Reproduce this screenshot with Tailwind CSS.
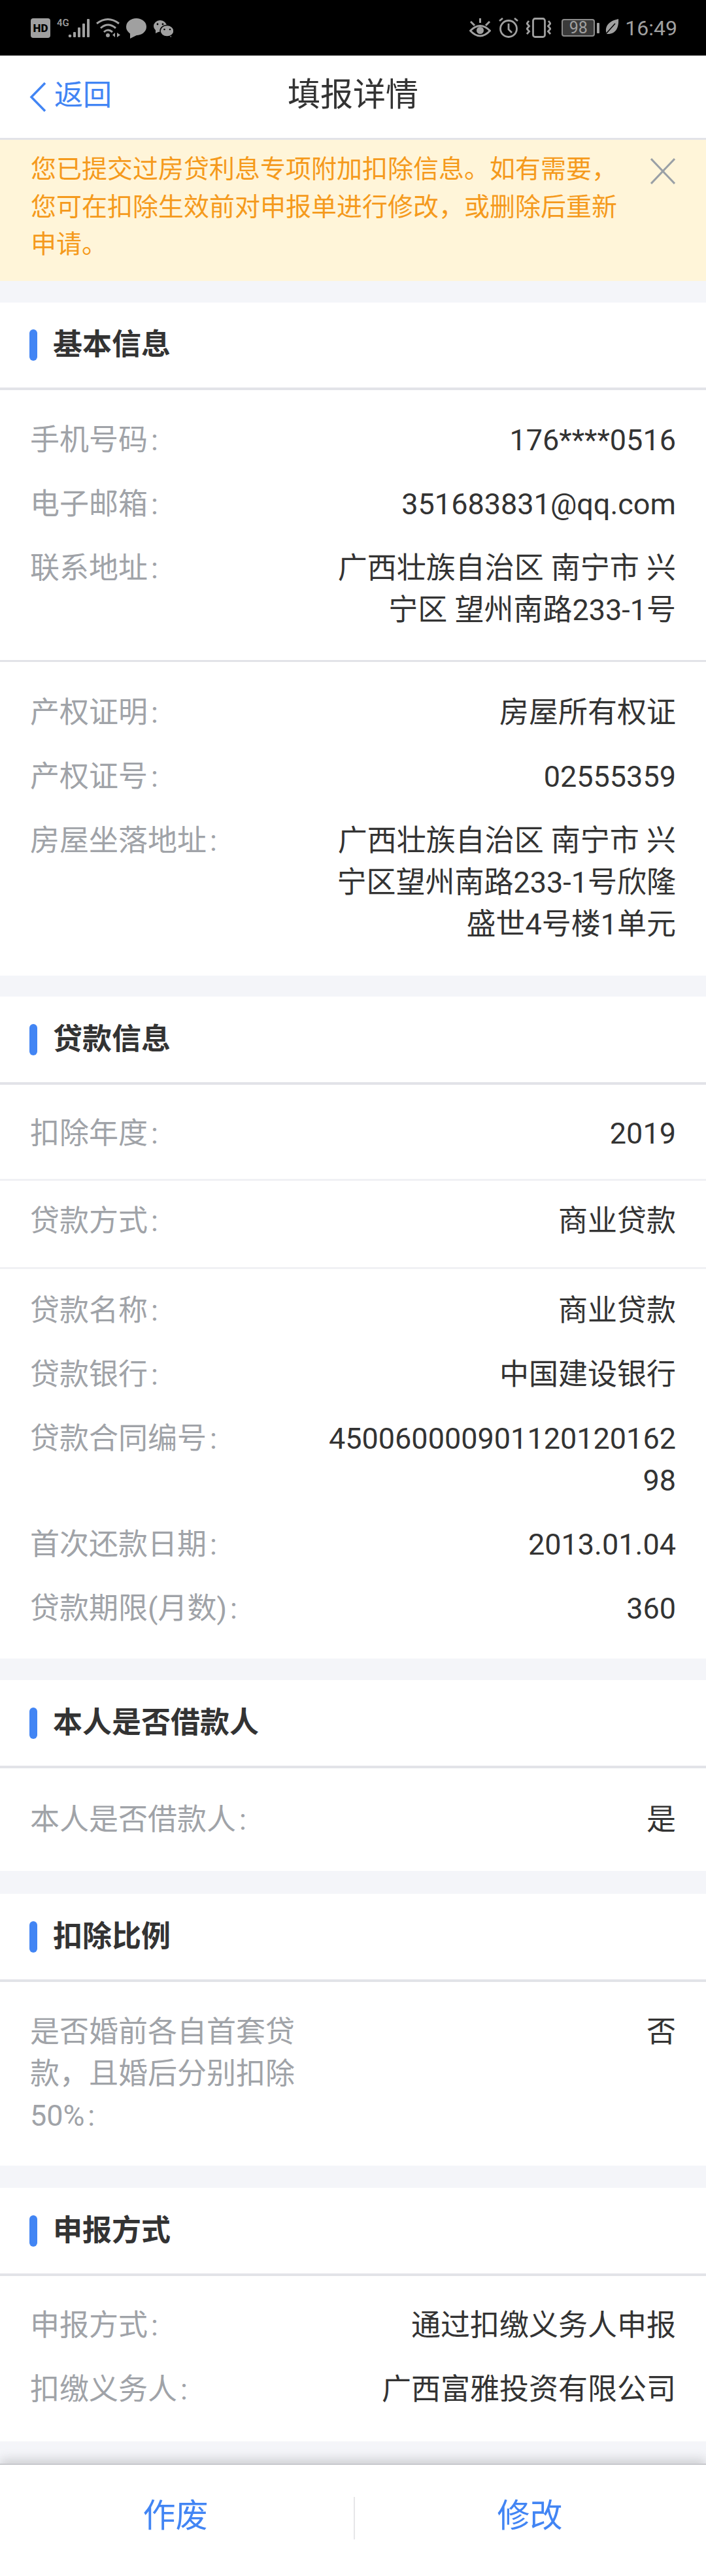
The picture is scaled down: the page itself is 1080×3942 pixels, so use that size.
<!DOCTYPE html>
<html lang="zh">
<head>
<meta charset="utf-8">
<script src="https://cdn.jsdelivr.net/npm/@tailwindcss/browser@4"></script>
<title>填报详情</title>
</head>
<body class="bg-[#f4f5f9] font-['Roboto','Noto_Sans_CJK_SC',sans-serif] text-[#333333]">
<div class="relative w-[1080px] h-[3942px] overflow-hidden">

  <!-- status bar -->
  <div class="flex justify-between items-start h-[85px] bg-black pl-[47px] pr-[44px] pt-[27px] text-[#a0a0a0]">
    <div class="flex items-start">
      <svg width="30" height="32" viewBox="0 0 30 32"><rect y="1" width="30" height="30" rx="4" fill="#a0a0a0"/><text x="15" y="22" font-size="17" font-weight="900" text-anchor="middle" fill="#000" font-family="Roboto">HD</text></svg>
      <div class="relative ml-[10px] w-[50px] h-[32px]">
        <span class="absolute left-0 top-[1px] text-[15px] leading-[15px] font-medium">4G</span>
        <svg class="absolute left-0 top-0" width="50" height="32" viewBox="0 0 50 32" fill="#a0a0a0"><circle cx="20" cy="28" r="2.3"/><rect x="25" y="22" width="4" height="8" rx="1"/><rect x="32" y="15" width="4" height="15" rx="1"/><rect x="39" y="9" width="4" height="21" rx="1"/><rect x="46" y="2" width="4" height="28" rx="1"/></svg>
      </div>
      <svg class="ml-[10px]" width="37" height="32" viewBox="0 0 37 32"><g fill="none" stroke="#a0a0a0" stroke-width="3"><path d="M1 9Q18 -4 35 9"/><path d="M7 16Q18 6 30 16"/><path d="M12 22Q18 16 25 22"/></g><g fill="#a0a0a0"><circle cx="18" cy="27" r="3"/><path d="M29 23V30L25 26.500ZM32 23V30L37 26.500Z"/></g></svg>
      <svg class="ml-[9px]" width="31" height="32" viewBox="0 0 31 32" fill="#a0a0a0"><ellipse cx="15.500" cy="14" rx="15.500" ry="13"/><path d="M6 22V32L18 26Z"/></svg>
      <svg class="ml-[11px]" width="30" height="32" viewBox="0 0 30 32"><g fill="#a0a0a0"><ellipse cx="10" cy="13" rx="10" ry="9"/><path d="M3 18V24L9 21Z"/><path d="M27 25V30L21 27Z"/><ellipse cx="20.500" cy="20.300" rx="10.500" ry="8.800" stroke="#000" stroke-width="1.500"/></g><g fill="#000"><circle cx="6" cy="10" r="1.400"/><circle cx="14" cy="10" r="1.400"/><circle cx="16.500" cy="18" r="1.300"/><circle cx="25" cy="18" r="1.300"/></g></svg>
    </div>
    <div class="flex items-start">
      <svg width="33" height="32" viewBox="0 0 33 32" fill="none" stroke="#a0a0a0" stroke-width="3"><path d="M1.500 20Q16.500 5 31.500 20Q16.500 36 1.500 20Z"/><circle cx="16.500" cy="19.500" r="5.500" fill="#a0a0a0" stroke="none"/><path d="M16.500 1V8M2 6L8 12M31 6L25 12"/></svg>
      <svg class="ml-[12px]" width="30" height="32" viewBox="0 0 30 32" fill="none" stroke="#a0a0a0" stroke-width="2.800"><circle cx="15" cy="17" r="12.500"/><path d="M15 9V18L20 23M1 5L6 1M29 5L24 1"/></svg>
      <svg class="ml-[12px]" width="38" height="32" viewBox="0 0 38 32" fill="none" stroke="#a0a0a0" stroke-width="2.800"><rect x="10.500" y="1.500" width="18" height="28" rx="3"/><path d="M4 5L1 9L4.500 13L1 17L4.500 21L1 25M34 5L37 9L33.500 13L37 17L33.500 21L37 25"/></svg>
      <div class="flex items-center ml-[16px] mt-[2px]">
        <div class="w-[51px] h-[27px] border-2 border-[#8c8c8c] bg-[#3a3a3a] rounded-[4px] flex items-center justify-center text-[25px] leading-none">98</div>
        <div class="w-[4px] h-[16px] bg-[#a0a0a0] ml-[3px] rounded-[1px]"></div>
      </div>
      <svg class="ml-[6px]" width="24" height="32" viewBox="0 0 24 32"><path d="M23 2C24 15 19 26 5 25C1 14 8 5 23 2Z" fill="#a0a0a0"/><path d="M1 28L18 9" stroke="#000" stroke-width="1.500"/></svg>
      <span class="ml-[9px] text-[32px] leading-[32px]">16:49</span>
    </div>
  </div>

  <!-- nav -->
  <div class="relative flex justify-center items-center h-[129px] bg-white border-b-[3px] border-[#e2e3e8] pb-[6px]">
    <div class="absolute left-[45px] top-[40px] flex items-center gap-[12px] text-[44px] leading-[47px] text-[#4285f4]">
      <svg width="26" height="47" viewBox="0 0 26 47" fill="none" stroke="#4285f4" stroke-width="3.500"><path d="M24 2L3 23.500L24 45"/></svg>
      <span class="-mt-[5px]">返回</span>
    </div>
    <span class="text-[50px] leading-none">填报详情</span>
  </div>

  <!-- notice -->
  <div class="relative h-[216px] bg-[#fff5d9] pl-[47px] pt-[17px] text-[39px] leading-[57.500px] text-[#f59a1c]">
    您已提交过房贷利息专项附加扣除信息。如有需要，<br>您可在扣除生效前对申报单进行修改，或删除后重新<br>申请。
    <svg class="absolute left-[995px] top-[28px]" width="38" height="40" viewBox="0 0 38 40" fill="none" stroke="#9aa0a6" stroke-width="3"><path d="M1 1L37 39M37 1L1 39"/></svg>
  </div>

  <!-- 基本信息 -->
  <div class="mt-[33px] bg-white text-[45px] leading-[64px]">
    <div class="flex items-center gap-[24px] h-[134px] pl-[45px] border-b-[4px] border-[#e2e3e8]">
      <span class="w-[12px] h-[48px] rounded-full bg-[#4285f4]"></span>
      <span class="font-bold">基本信息</span>
    </div>
    <div class="flex flex-col gap-[34px] px-[46px] pt-[45px] pb-[44px] border-b-[3px] border-[#e2e3e8]">
      <div class="flex justify-between items-start"><span class="text-[#a0a3a8]">手机号码<span class="ml-[5px]">:</span></span><span>176****0516</span></div>
      <div class="flex justify-between items-start"><span class="text-[#a0a3a8]">电子邮箱<span class="ml-[5px]">:</span></span><span>351683831@qq.com</span></div>
      <div class="flex justify-between items-start"><span class="text-[#a0a3a8]">联系地址<span class="ml-[5px]">:</span></span><span class="w-[520px] text-right">广西壮族自治区 南宁市 兴宁区 望州南路233-1号</span></div>
    </div>
    <div class="flex flex-col gap-[34px] px-[46px] pt-[46px] pb-[46px]">
      <div class="flex justify-between items-start"><span class="text-[#a0a3a8]">产权证明<span class="ml-[5px]">:</span></span><span>房屋所有权证</span></div>
      <div class="flex justify-between items-start"><span class="text-[#a0a3a8]">产权证号<span class="ml-[5px]">:</span></span><span>02555359</span></div>
      <div class="flex justify-between items-start"><span class="text-[#a0a3a8]">房屋坐落地址<span class="ml-[5px]">:</span></span><span class="w-[520px] text-right">广西壮族自治区 南宁市 兴宁区望州南路233-1号欣隆盛世4号楼1单元</span></div>
    </div>
  </div>

  <!-- 贷款信息 -->
  <div class="mt-[32px] bg-white text-[45px] leading-[64px]">
    <div class="flex items-center gap-[24px] h-[135px] pl-[45px] border-b-[4px] border-[#e2e3e8]">
      <span class="w-[12px] h-[48px] rounded-full bg-[#4285f4]"></span>
      <span class="font-bold">贷款信息</span>
    </div>
    <div class="flex justify-between items-center h-[147px] px-[46px] pt-[6px] border-b-[3px] border-[#f0f1f4]"><span class="text-[#a0a3a8]">扣除年度<span class="ml-[5px]">:</span></span><span>2019</span></div>
    <div class="flex justify-between items-center h-[135px] px-[46px] pb-[8px] border-b-[3px] border-[#f0f1f4]"><span class="text-[#a0a3a8]">贷款方式<span class="ml-[5px]">:</span></span><span>商业贷款</span></div>
    <div class="flex flex-col gap-[34px] px-[46px] pt-[32px] pb-[44px]">
      <div class="flex justify-between items-start"><span class="text-[#a0a3a8]">贷款名称<span class="ml-[5px]">:</span></span><span>商业贷款</span></div>
      <div class="flex justify-between items-start"><span class="text-[#a0a3a8]">贷款银行<span class="ml-[5px]">:</span></span><span>中国建设银行</span></div>
      <div class="flex justify-between items-start"><span class="text-[#a0a3a8]">贷款合同编号<span class="ml-[5px]">:</span></span><span class="w-[540px] text-right break-all">45006000090112012016298</span></div>
      <div class="flex justify-between items-start"><span class="text-[#a0a3a8]">首次还款日期<span class="ml-[5px]">:</span></span><span>2013.01.04</span></div>
      <div class="flex justify-between items-start"><span class="text-[#a0a3a8]">贷款期限(月数)<span class="ml-[5px]">:</span></span><span>360</span></div>
    </div>
  </div>

  <!-- 本人是否借款人 -->
  <div class="mt-[33px] bg-white text-[45px] leading-[64px]">
    <div class="flex items-center gap-[24px] h-[135px] pl-[45px] border-b-[4px] border-[#e2e3e8]">
      <span class="w-[12px] h-[48px] rounded-full bg-[#4285f4]"></span>
      <span class="font-bold">本人是否借款人</span>
    </div>
    <div class="flex justify-between items-center h-[157px] px-[46px]"><span class="text-[#a0a3a8]">本人是否借款人<span class="ml-[5px]">:</span></span><span>是</span></div>
  </div>

  <!-- 扣除比例 -->
  <div class="mt-[35px] bg-white text-[45px] leading-[64px]">
    <div class="flex items-center gap-[24px] h-[135px] pl-[45px] border-b-[4px] border-[#e2e3e8]">
      <span class="w-[12px] h-[48px] rounded-full bg-[#4285f4]"></span>
      <span class="font-bold">扣除比例</span>
    </div>
    <div class="flex justify-between items-start px-[46px] pt-[45px] pb-[44px]"><span class="w-[420px] text-[#a0a3a8]">是否婚前各自首套贷款，且婚后分别扣除50%&#8202;:</span><span>否</span></div>
  </div>

  <!-- 申报方式 -->
  <div class="mt-[34px] bg-white text-[45px] leading-[64px]">
    <div class="flex items-center gap-[24px] h-[135px] pl-[45px] border-b-[4px] border-[#e2e3e8]">
      <span class="w-[12px] h-[48px] rounded-full bg-[#4285f4]"></span>
      <span class="font-bold">申报方式</span>
    </div>
    <div class="flex flex-col gap-[34px] px-[46px] pt-[44px] pb-[47px]">
      <div class="flex justify-between items-start"><span class="text-[#a0a3a8]">申报方式<span class="ml-[5px]">:</span></span><span>通过扣缴义务人申报</span></div>
      <div class="flex justify-between items-start"><span class="text-[#a0a3a8]">扣缴义务人<span class="ml-[5px]">:</span></span><span>广西富雅投资有限公司</span></div>
    </div>
  </div>

  <!-- footer -->
  <div class="absolute left-0 right-0 bottom-0 flex items-center h-[172px] bg-white border-t-[2px] border-[#c8c9cd] shadow-[0_-6px_16px_rgba(0,0,0,0.16)] text-[50px] text-[#4285f4]">
    <div class="flex justify-center w-[541px] pr-[4px] pb-[14px]">作废</div>
    <div class="w-[2px] h-[65px] bg-[#e6e6e8] mt-[-8px]"></div>
    <div class="flex justify-center flex-1 pr-[2px] pb-[14px]">修改</div>
  </div>
</div>
</body>
</html>
